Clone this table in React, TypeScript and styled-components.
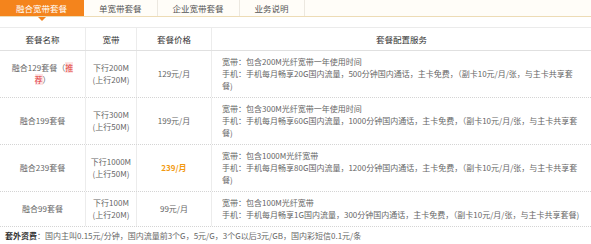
import styled, { createGlobalStyle, css } from "styled-components";

const GlobalStyle = createGlobalStyle`
  html, body {
    margin: 0;
    padding: 0;
    background: #fff;
  }
  body {
    font-family: "Noto Sans CJK SC", "Microsoft YaHei", sans-serif;
  }
`;

const Page = styled.div`
  width: 591px;
`;

const TabBar = styled.div`
  display: flex;
  height: 16px;
  background: #fffdf8;
  border-bottom: 1px solid #eddcb6;
`;

const Tab = styled.div<{ $active?: boolean }>`
  position: relative;
  padding: 0 15px;
  line-height: 16px;
  font-size: 8.5px;
  color: #555;
  border-right: 1px solid #ece8e0;
  white-space: nowrap;
  ${(p) =>
    p.$active &&
    css`
      padding: 0 16px;
      background: #f4841c;
      color: #fff;
      border-right-color: #f4841c;
      &::after {
        content: "";
        position: absolute;
        left: 50%;
        bottom: -5px;
        margin-left: -4px;
        border-left: 4px solid transparent;
        border-right: 4px solid transparent;
        border-top: 4px solid #f4841c;
      }
    `}
`;

const Table = styled.div`
  margin-top: 10px;
  border-top: 1px solid #ebebeb;
`;

const columns = "86px 51px 75px 1fr";

const HeadRow = styled.div`
  display: grid;
  grid-template-columns: ${columns};
  height: 22px;
  border-bottom: 1px solid #e0e0e0;
`;

const HeadCell = styled.div`
  display: flex;
  align-items: center;
  justify-content: center;
  font-size: 8.5px;
  color: #333;
  border-right: 1px solid #ececec;
  &:last-child {
    border-right: none;
  }
`;

const BodyRow = styled.div`
  display: grid;
  grid-template-columns: ${columns};
  border-bottom: 1px dotted #d4d4d4;
`;

const Cell = styled.div<{ $left?: boolean }>`
  display: flex;
  flex-direction: column;
  justify-content: center;
  align-items: ${(p) => (p.$left ? "flex-start" : "center")};
  padding: 5px 0 5px ${(p) => (p.$left ? "10px" : "0")};
  font-size: 8px;
  line-height: 12px;
  color: #666;
  white-space: nowrap;
  border-right: 1px solid #ececec;
  &:last-child {
    border-right: none;
  }
`;

const Price = styled.span<{ $hot?: boolean }>`
  ${(p) =>
    p.$hot &&
    css`
      color: #f29a12;
      font-weight: bold;
    `}
`;

const Tag = styled.span`
  color: #e0393c;
  background: #fde3e3;
`;

const Footer = styled.div`
  padding: 3px 5px;
  font-size: 8px;
  line-height: 12px;
  color: #666;
`;

const FooterLabel = styled.b`
  color: #333;
`;

type Plan = {
  name: string[];
  recommend?: boolean;
  down: string;
  up: string;
  price: string;
  hot?: boolean;
  config: string[];
};

const plans: Plan[] = [
  {
    name: ["融合129套餐（", "）"],
    recommend: true,
    down: "下行200M",
    up: "(上行20M)",
    price: "129元/月",
    config: [
      "宽带：包含200M光纤宽带一年使用时间",
      "手机：手机每月畅享20G国内流量，500分钟国内通话，主卡免费，（副卡10元/月/张，与主卡共享套",
      "餐)",
    ],
  },
  {
    name: ["融合199套餐"],
    down: "下行300M",
    up: "(上行50M)",
    price: "199元/月",
    config: [
      "宽带：包含300M光纤宽带一年使用时间",
      "手机：手机每月畅享60G国内流量，1000分钟国内通话，主卡免费，（副卡10元/月/张，与主卡共享套",
      "餐)",
    ],
  },
  {
    name: ["融合239套餐"],
    down: "下行1000M",
    up: "(上行50M)",
    price: "239/月",
    hot: true,
    config: [
      "宽带：包含1000M光纤宽带",
      "手机：手机每月畅享80G国内流量，1200分钟国内通话，主卡免费，（副卡10元/月/张，与主卡共享套",
      "餐)",
    ],
  },
  {
    name: ["融合99套餐"],
    down: "下行100M",
    up: "(上行20M)",
    price: "99元/月",
    config: [
      "宽带：包含100M光纤宽带",
      "手机：手机每月畅享1G国内流量，300分钟国内通话，主卡免费，（副卡10元/月/张，与主卡共享套餐)",
    ],
  },
];

const tabs = ["融合宽带套餐", "单宽带套餐", "企业宽带套餐", "业务说明"];

export default function App() {
  return (
    <Page>
      <GlobalStyle />
      <TabBar>
        {tabs.map((t, i) => (
          <Tab key={t} $active={i === 0}>
            {t}
          </Tab>
        ))}
      </TabBar>
      <Table>
        <HeadRow>
          <HeadCell>套餐名称</HeadCell>
          <HeadCell>宽带</HeadCell>
          <HeadCell>套餐价格</HeadCell>
          <HeadCell>套餐配置服务</HeadCell>
        </HeadRow>
        {plans.map((p) => (
          <BodyRow key={p.price}>
            <Cell>
              {p.recommend ? (
                <>
                  <div>
                    {p.name[0]}
                    <Tag>推</Tag>
                  </div>
                  <div>
                    <Tag>荐</Tag>
                    {p.name[1]}
                  </div>
                </>
              ) : (
                <div>{p.name[0]}</div>
              )}
            </Cell>
            <Cell>
              <div>{p.down}</div>
              <div>{p.up}</div>
            </Cell>
            <Cell>
              <Price $hot={p.hot}>{p.price}</Price>
            </Cell>
            <Cell $left>
              {p.config.map((line) => (
                <div key={line}>{line}</div>
              ))}
            </Cell>
          </BodyRow>
        ))}
      </Table>
      <Footer>
        <FooterLabel>套外资费</FooterLabel>
        ：国内主叫0.15元/分钟，国内流量前3个G，5元/G，3个G以后3元/GB，国内彩短信0.1元/条
      </Footer>
    </Page>
  );
}
